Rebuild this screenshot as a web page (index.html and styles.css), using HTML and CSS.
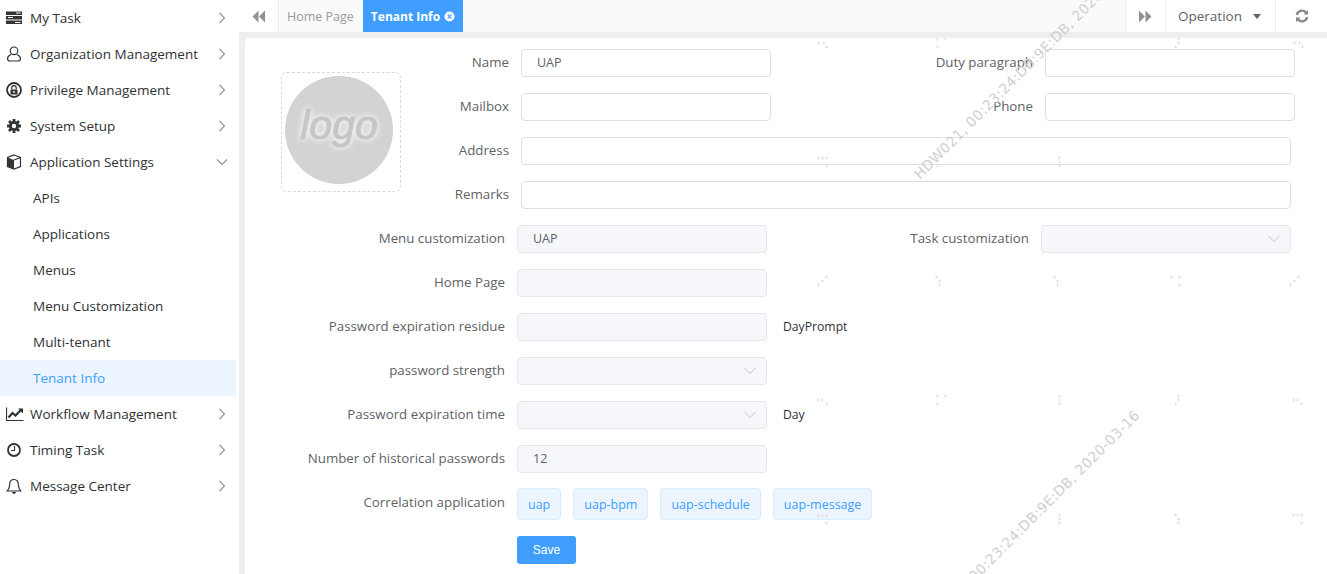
FILE: index.html
```html
<!DOCTYPE html>
<html lang="en">
<head>
<meta charset="utf-8">
<title>Tenant Info</title>
<link rel="stylesheet" href="styles.css">
</head>
<body>
<div class="app">
  <aside class="sidebar">
    <ul class="menu">
      <li class="item"><svg class="ico" viewBox="0 0 16 16"><path d="M0 1.500h16v3.500H0zM0 6h16v3.500H0zM0 10.500h16V14H0z" fill="#333"/><path d="M10 3h4.500M2 7.500h5M9 12.500h5.500" stroke="#fff" stroke-width="1"/></svg><span class="text">My Task</span><svg class="arrow" viewBox="0 0 8 12"><path d="M1.500 1l5 5-5 5"/></svg></li>
      <li class="item"><svg class="ico" viewBox="0 0 16 16"><circle cx="8" cy="4.800" r="3.800" class="line"/><path d="M5 8.500C3 9.500 1.500 10.500 1.500 12.500c0 1.500.8 2.500 2.500 2.500h8c1.700 0 2.500-1 2.500-2.500 0-2-1.500-3-3.500-4" class="line"/></svg><span class="text">Organization Management</span><svg class="arrow" viewBox="0 0 8 12"><path d="M1.500 1l5 5-5 5"/></svg></li>
      <li class="item"><svg class="ico" viewBox="0 0 16 16"><circle cx="8" cy="8" r="7" class="line thick"/><path d="M4.500 7.500h7v5h-7z" fill="#333"/><path d="M5.800 7.500V5.800a2.200 2.200 0 0 1 4.400 0v1.700" class="line"/><circle cx="8" cy="10" r=".9" fill="#fff"/></svg><span class="text">Privilege Management</span><svg class="arrow" viewBox="0 0 8 12"><path d="M1.500 1l5 5-5 5"/></svg></li>
      <li class="item"><svg class="ico" viewBox="0 0 16 16"><path d="M8 1v14M1 8h14M3 3l10 10M13 3L3 13" stroke="#333" stroke-width="2.800"/><circle cx="8" cy="8" r="5" fill="#333"/><circle cx="8" cy="8" r="2.200" fill="#fff"/></svg><span class="text">System Setup</span><svg class="arrow" viewBox="0 0 8 12"><path d="M1.500 1l5 5-5 5"/></svg></li>
      <li class="item"><svg class="ico" viewBox="0 0 16 16"><path d="M8 1l6.500 2.500v9L8 15l-6.500-2.500v-9z" class="line"/><path d="M1.500 3.500L8 6v9l-6.500-2.500z" fill="#333"/><path d="M8 6l6.500-2.500" class="line"/></svg><span class="text">Application Settings</span><svg class="arrow down" viewBox="0 0 12 8"><path d="M1 1.500l5 5 5-5"/></svg></li>
      <li class="sub">APIs</li>
      <li class="sub">Applications</li>
      <li class="sub">Menus</li>
      <li class="sub">Menu Customization</li>
      <li class="sub">Multi-tenant</li>
      <li class="sub active">Tenant Info</li>
      <li class="item"><svg class="ico wide" viewBox="0 0 18 16"><path d="M.5 1.500v13h17" class="line"/><path d="M2.500 11.500l4-4.500 3 2.500 6-6" class="line heavy"/><path d="M12 2.500h5v5z" fill="#333"/></svg><span class="text">Workflow Management</span><svg class="arrow" viewBox="0 0 8 12"><path d="M1.500 1l5 5-5 5"/></svg></li>
      <li class="item"><svg class="ico" viewBox="0 0 16 16"><circle cx="8" cy="8" r="6" class="line thick"/><path d="M8.500 4v4.500H5" class="line"/></svg><span class="text">Timing Task</span><svg class="arrow" viewBox="0 0 8 12"><path d="M1.500 1l5 5-5 5"/></svg></li>
      <li class="item"><svg class="ico" viewBox="0 0 16 16"><path d="M8 1.500c-2.800 0-4.300 2.200-4.300 4.800 0 3.500-1 5-2.400 6.700h13.400c-1.400-1.700-2.400-3.200-2.400-6.700C12.300 3.700 10.800 1.500 8 1.500z" class="line"/><path d="M6 14h4c0 1-.9 1.800-2 1.800S6 15 6 14z" fill="#333"/></svg><span class="text">Message Center</span><svg class="arrow" viewBox="0 0 8 12"><path d="M1.500 1l5 5-5 5"/></svg></li>
    </ul>
  </aside>
  <main class="main">
    <header class="tabbar">
      <button class="nav-btn prev"><svg class="dbl" viewBox="0 0 12 12"><path d="M6 0.500v11L0.500 6zM12 0.500v11L6.500 6z"/></svg></button>
      <div class="tabs">
        <span class="tab">Home Page</span>
        <span class="tab current">Tenant Info<svg class="close" viewBox="0 0 12 12"><circle cx="6" cy="6" r="5.500" fill="#fff"/><path d="M4 4l4 4M8 4l-4 4" stroke="#409eff" stroke-width="1.400"/></svg></span>
      </div>
      <button class="nav-btn next"><svg class="dbl" viewBox="0 0 12 12"><path d="M0 0.500v11L5.500 6zM6 0.500v11L11.500 6z"/></svg></button>
      <button class="nav-btn operation">Operation<i class="caret"></i></button>
      <button class="nav-btn refresh"><svg class="reload" viewBox="0 0 14 14"><path d="M1.800 6A5.300 5.300 0 0 1 11 3.500" class="rl"/><path d="M12.200 8A5.300 5.300 0 0 1 3 10.500" class="rl"/><path d="M13 1v4.500H8.500zM1 13V8.500h4.500z" fill="#888"/></svg></button>
    </header>
    <section class="content">
      <div class="top">
        <div class="logo-box">
          <div class="logo"><span class="logo-text">logo</span></div>
        </div>
        <div class="top-form">
          <div class="row">
            <div class="field half"><label class="lab">Name</label><div class="input pad">UAP</div></div>
            <div class="field half"><label class="lab">Duty paragraph</label><div class="input"></div></div>
          </div>
          <div class="row">
            <div class="field half"><label class="lab">Mailbox</label><div class="input"></div></div>
            <div class="field half"><label class="lab">Phone</label><div class="input"></div></div>
          </div>
          <div class="row">
            <div class="field"><label class="lab">Address</label><div class="input full"></div></div>
          </div>
          <div class="row">
            <div class="field"><label class="lab">Remarks</label><div class="input full"></div></div>
          </div>
        </div>
      </div>
      <div class="low-form">
        <div class="row">
          <div class="field half2"><label class="lab">Menu customization</label><div class="input off pad">UAP</div></div>
          <div class="field half3"><label class="lab">Task customization</label><div class="input off sel"><svg class="chev" viewBox="0 0 12 8"><path d="M.5 1l5.500 5.500L11.500 1"/></svg></div></div>
        </div>
        <div class="row">
          <div class="field half2"><label class="lab">Home Page</label><div class="input off"></div></div>
        </div>
        <div class="row">
          <div class="field half2"><label class="lab">Password expiration residue</label><div class="input off"></div><span class="unit">DayPrompt</span></div>
        </div>
        <div class="row">
          <div class="field half2"><label class="lab">password strength</label><div class="input off sel"><svg class="chev" viewBox="0 0 12 8"><path d="M.5 1l5.500 5.500L11.500 1"/></svg></div></div>
        </div>
        <div class="row">
          <div class="field half2"><label class="lab">Password expiration time</label><div class="input off sel"><svg class="chev" viewBox="0 0 12 8"><path d="M.5 1l5.500 5.500L11.500 1"/></svg></div><span class="unit">Day</span></div>
        </div>
        <div class="row">
          <div class="field half2"><label class="lab">Number of historical passwords</label><div class="input off pad">12</div></div>
        </div>
        <div class="row">
          <div class="field half2"><label class="lab">Correlation application</label>
            <div class="tags"><span class="tag">uap</span><span class="tag">uap-bpm</span><span class="tag">uap-schedule</span><span class="tag">uap-message</span></div>
          </div>
        </div>
        <div class="actions"><button class="save">Save</button></div>
      </div>
    </section>
    <div class="watermark" aria-hidden="true">
      <span class="wm wm-a">HDW021, 00:23:24:DB:9E:DB, 2020-03-16</span>
      <span class="wm wm-b">HDW021, 00:23:24:DB:9E:DB, 2020-03-16</span>
      <svg class="marks" width="1327" height="574" viewBox="0 0 1327 574"><path d="M817 43h3M818.500 41.500v3M822 43h3M823.500 41.500v3M825 47h3M826.500 45.500v3M936 39h3M937.500 37.500v3M944 39h3M945.500 37.500v3M936 47h3M937.500 45.500v3M1177 39h3M1178.500 37.500v3M1177 43h3M1178.500 41.500v3M1174 47h3M1175.500 45.500v3M1293 43h3M1294.500 41.500v3M1298 43h3M1299.500 41.500v3M1301 47h3M1302.500 45.500v3M817 158h3M818.500 156.500v3M821 158h3M822.500 156.500v3M825 158h3M826.500 156.500v3M825 166h3M826.500 164.500v3M936 158h3M937.500 156.500v3M936 166h3M937.500 164.500v3M1058 158h3M1059.500 156.500v3M1058 162h3M1059.500 160.500v3M1058 166h3M1059.500 164.500v3M817 285h3M818.500 283.500v3M821 281h3M822.500 279.500v3M825 277h3M826.500 275.500v3M935 277h3M936.500 275.500v3M938 281h3M939.500 279.500v3M938 285h3M939.500 283.500v3M1053 277h3M1054.500 275.500v3M1056 281h3M1057.500 279.500v3M1056 285h3M1057.500 283.500v3M1170 277h3M1171.500 275.500v3M1178 277h3M1179.500 275.500v3M1178 285h3M1179.500 283.500v3M1289 285h3M1290.500 283.500v3M1293 281h3M1294.500 279.500v3M1297 277h3M1298.500 275.500v3M817 400h3M818.500 398.500v3M821 400h3M822.500 398.500v3M825 404h3M826.500 402.500v3M936 396h3M937.500 394.500v3M944 396h3M945.500 394.500v3M936 404h3M937.500 402.500v3M1058 396h3M1059.500 394.500v3M1058 400h3M1059.500 398.500v3M1058 404h3M1059.500 402.500v3M1177 396h3M1178.500 394.500v3M1177 400h3M1178.500 398.500v3M1174 404h3M1175.500 402.500v3M1292 400h3M1293.500 398.500v3M1296 400h3M1297.500 398.500v3M1300 404h3M1301.500 402.500v3M817 516h3M818.500 514.500v3M821 516h3M822.500 514.500v3M825 516h3M826.500 514.500v3M825 523h3M826.500 521.500v3M1058 515h3M1059.500 513.500v3M1058 519h3M1059.500 517.500v3M1058 523h3M1059.500 521.500v3M1174 515h3M1175.500 513.500v3M1177 519h3M1178.500 517.500v3M1177 523h3M1178.500 521.500v3M1292 515h3M1293.500 513.500v3M1296 515h3M1297.500 513.500v3M1300 515h3M1301.500 513.500v3M1300 523h3M1301.500 521.500v3"/></svg>
    </div>
  </main>
</div>
</body>
</html>
```
FILE: styles.css
```css
* { box-sizing: border-box; }
html, body { margin: 0; height: 100%; overflow: hidden; }
body { font-family: "Open Sans", "Noto Sans", sans-serif; font-size: 13.5px; color: #606266; background: #fff; }
.app { display: flex; height: 574px; }
.sidebar { width: 239px; flex: none; background: #fff; padding-right: 3px; }
.menu { list-style: none; margin: 0; padding: 0; }
.item, .sub { height: 36px; display: flex; align-items: center; color: #303133; }
.item { padding-left: 6px; }
.sub { padding-left: 33px; }
.sub.active { background: #ecf5ff; color: #409eff; }
.ico { width: 16px; height: 16px; flex: none; margin-right: 8px; }
.ico.wide { width: 18px; margin-right: 6px; }
.line { fill: none; stroke: #333; stroke-width: 1.2; }
.line.thick { stroke-width: 1.800; }
.line.heavy { stroke-width: 2.200; }
.text { flex: 1; }
.arrow { width: 8px; height: 12px; flex: none; margin-right: 10px; fill: none; stroke: #909399; stroke-width: 1.200; }
.arrow.down { width: 12px; height: 8px; margin-right: 8px; }
.main { flex: 1; min-width: 0; background: #eee; padding-left: 6px; display: flex; flex-direction: column; }
.tabbar { height: 32px; flex: none; display: flex; margin-left: -6px; margin-bottom: 6px; background: #fafafa; }
.nav-btn { border: 0; border-left: 1px solid #eee; background: #fff; padding: 0; font: inherit; color: #606266; display: flex; align-items: center; justify-content: center; }
.prev { width: 40px; border-left: 0; border-right: 1px solid #eee; }
.next { width: 40px; }
.operation { width: 110px; gap: 11px; padding-right: 2px; }
.refresh { width: 52px; }
.dbl { width: 13px; height: 13px; fill: #919191; }
.reload { width: 14px; height: 14px; }
.rl { fill: none; stroke: #888; stroke-width: 2.400; }
.caret { width: 0; height: 0; border-left: 4px solid transparent; border-right: 4px solid transparent; border-top: 5px solid #606266; }
.tabs { flex: 1; display: flex; }
.tab { height: 32px; padding: 0 9px 0 8px; display: flex; align-items: center; color: #999; background: #fafafa; font-size: 12.500px; white-space: nowrap; }
.tab.current { background: #409eff; color: #fff; font-weight: 700; width: 100px; font-size: 12px; }
.close { width: 11px; height: 11px; margin-left: 4px; flex: none; }
.content { flex: 1; background: #fff; border-radius: 4px 0 0 0; padding-left: 36px; position: relative; overflow: hidden; }
.top { display: flex; align-items: flex-start; }
.logo-box { width: 120px; height: 120px; flex: none; margin-top: 34px; border: 1px dashed #d9d9d9; border-radius: 6px; padding: 3px; }
.logo { width: 108px; height: 108px; border-radius: 50%; background: #d3d3d3; display: flex; align-items: center; justify-content: center; overflow: hidden; }
.logo-text { font-family: "Liberation Sans", sans-serif; font-style: italic; font-size: 41px; color: #c6c6c6; -webkit-text-stroke: 1px #c6c6c6; text-shadow: 0 0 4px #f4f4f4, 0 0 6px #f4f4f4, 0 0 8px #ececec; margin-top: -10px; }
.top-form { padding-top: 11px; }
.row { display: flex; height: 28px; margin-bottom: 16px; }
.field { display: flex; align-items: center; }
.lab { text-align: right; padding: 0 12px 2px 0; flex: none; font-size: 13.300px; white-space: nowrap; }
.top-form .lab { width: 120px; }
.top-form .half { width: 370px; }
.top-form .half + .half { width: 524px; }
.top-form .half + .half .lab { width: 274px; }
.input { width: 250px; height: 28px; border: 1px solid #dcdfe6; border-radius: 4px; background: #fff; flex: none; display: flex; align-items: center; color: #606266; }
.input.full { width: 770px; }
.input.pad { padding: 0 0 2px 15px; font-size: 12.500px; }
.input.off { background: #f5f7fa; border-color: #e4e7ed; }
.input.sel { justify-content: flex-end; padding-right: 10px; }
.chev { width: 12px; height: 8px; fill: none; stroke: #c0c4cc; stroke-width: 1; }
.low-form .lab { width: 236px; }
.low-form .half2 { width: 486px; }
.low-form .half3 { width: 524px; }
.low-form .half3 .lab { width: 274px; }
.unit { margin-left: 16px; font-size: 12.200px; color: #303133; white-space: nowrap; padding-bottom: 2px; }
.tags { display: flex; gap: 12px; margin-top: 2px; }
.tag { height: 32px; padding: 0 10px; display: flex; align-items: center; background: #ecf5ff; border: 1px solid #d9ecff; border-radius: 4px; color: #409eff; font-size: 12.500px; white-space: nowrap; }
.actions { padding-left: 236px; padding-top: 3px; }
.save { width: 59px; height: 28px; background: #409eff; border: 0; border-radius: 3px; color: #fff; font-family: "Liberation Sans", sans-serif; font-size: 12px; padding: 0; }
.watermark { position: absolute; inset: 0; pointer-events: none; overflow: hidden; }
.wm { position: absolute; white-space: nowrap; font-family: "DejaVu Sans", sans-serif; font-size: 14px; line-height: 16px; letter-spacing: .3px; color: #cfcfcf; transform: rotate(-45deg); transform-origin: left bottom; }
.wm-a { left: 922px; top: 166px; }
.wm-b { left: 925px; top: 620px; }
.marks { position: absolute; left: 0; top: 0; }
.marks path { stroke: #e2e2e2; stroke-width: 1; fill: none; }
```
